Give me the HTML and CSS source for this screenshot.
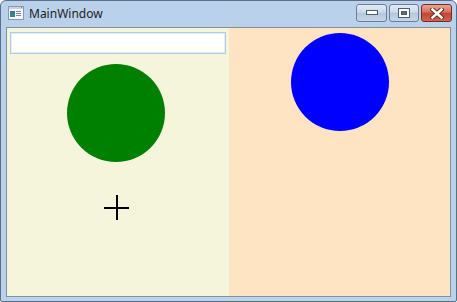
FILE: index.html
```html
<!DOCTYPE html>
<html lang="en">
<head>
  <meta charset="UTF-8">
  <title>MainWindow</title>
  <link rel="stylesheet" href="styles.css">
</head>
<body>
  <div class="window">
    <div class="titlebar">
      <svg class="app-icon" width="16" height="14" viewBox="0 0 16 14">
        <rect x="0.5" y="0.5" width="15" height="13" fill="#f4f6f9" stroke="#8b98a8"/>
        <rect x="1" y="1" width="14" height="2" fill="#c9d3df"/>
        <rect x="2" y="5" width="5" height="6" fill="#2f8f7a"/>
        <rect x="2" y="5" width="5" height="3" fill="#3a6fb8"/>
        <rect x="8" y="5" width="5" height="1" fill="#7a8796"/>
        <rect x="8" y="7" width="5" height="1" fill="#7a8796"/>
        <rect x="8" y="9" width="5" height="1" fill="#7a8796"/>
        <rect x="13" y="1" width="1" height="1" fill="#7a8796"/>
      </svg>
      <span class="title">MainWindow</span>
      <div class="caption-buttons">
        <div class="cap-btn">
          <svg width="12" height="6" viewBox="0 0 12 6"><rect x="0.5" y="0.5" width="11" height="4" fill="#fff" stroke="#4d5e74"/></svg>
        </div>
        <div class="cap-btn">
          <svg width="12" height="10" viewBox="0 0 12 10"><rect x="0.5" y="0.5" width="11" height="9" fill="#fff" stroke="#4d5e74"/><rect x="3.5" y="3.5" width="5" height="3" fill="#5b6c82" stroke="#4d5e74"/></svg>
        </div>
        <div class="cap-btn close">
          <svg width="14" height="11" viewBox="0 0 14 11"><path d="M2.5 1.5 L11.5 9.5 M11.5 1.5 L2.5 9.5" stroke="#5a2a22" stroke-width="4.4" stroke-linecap="square"/><path d="M2.5 1.5 L11.5 9.5 M11.5 1.5 L2.5 9.5" stroke="#fff" stroke-width="2.6" stroke-linecap="square"/></svg>
        </div>
      </div>
    </div>
    <div class="client">
      <div class="pane left">
        <input class="text-input" type="text">
        <div class="circle green"></div>
        <div class="cross"></div>
      </div>
      <div class="pane right">
        <div class="circle blue"></div>
      </div>
    </div>
  </div>
</body>
</html>
```

FILE: styles.css
```css
body {
  margin: 0;
  background: #fff;
  font-family: "Noto Sans", "Open Sans", sans-serif;
}

.window {
  box-sizing: border-box;
  width: 457px;
  height: 302px;
  border: 1px solid #5c6f86;
  border-radius: 6px 6px 2px 2px;
  background: #b9d1ea;
  padding: 0 5px 4px;
  display: flex;
  flex-direction: column;
}

.titlebar {
  height: 26px;
  display: flex;
  align-items: center;
  position: relative;
}

.app-icon {
  margin-left: 2px;
  margin-top: -2px;
}

.title {
  margin-left: 5px;
  margin-top: -2px;
  font-size: 12px;
  color: #1e1e1e;
}

.caption-buttons {
  position: absolute;
  top: 3px;
  right: -1px;
  display: flex;
  gap: 2px;
}

.cap-btn {
  box-sizing: border-box;
  width: 31px;
  height: 18px;
  border: 1px solid #6d7f96;
  border-radius: 3px;
  background: linear-gradient(#e3ecf6 0%, #cbd9e9 45%, #b3c6dc 50%, #c6d6e8 100%);
  display: flex;
  align-items: center;
  justify-content: center;
}

.cap-btn:nth-child(2) {
  width: 30px;
}

.cap-btn.close {
  width: 31px;
  border-color: #7a2a20;
  background: linear-gradient(#e9a595 0%, #d5705c 45%, #c24532 50%, #d0644c 100%);
}

.client {
  flex: 1;
  border: 1px solid #838e9b;
  display: grid;
  grid-template-columns: 222px 1fr;
}

.pane {
  position: relative;
}

.left {
  background: #f5f5dc;
}

.right {
  background: #ffe4c4;
}

.text-input {
  display: block;
  box-sizing: border-box;
  margin: 4px 3px 0;
  width: 216px;
  height: 22px;
  border: 1px solid #abcde6;
  outline: 1px solid #e3eef7;
  outline-offset: -2px;
  background: #fff;
  padding: 0;
}

.circle {
  position: absolute;
  width: 98px;
  height: 98px;
  border-radius: 50%;
}

.green {
  left: 60px;
  top: 36px;
  background: #008000;
}

.blue {
  left: 62px;
  top: 5px;
  background: #0000ff;
}

.cross {
  position: absolute;
  left: 97px;
  top: 167px;
  width: 25px;
  height: 25px;
}

.cross::before,
.cross::after {
  content: "";
  position: absolute;
  background: #000;
}

.cross::before {
  left: 0;
  top: 12px;
  width: 25px;
  height: 2px;
}

.cross::after {
  left: 12px;
  top: 0;
  width: 2px;
  height: 25px;
}
```
